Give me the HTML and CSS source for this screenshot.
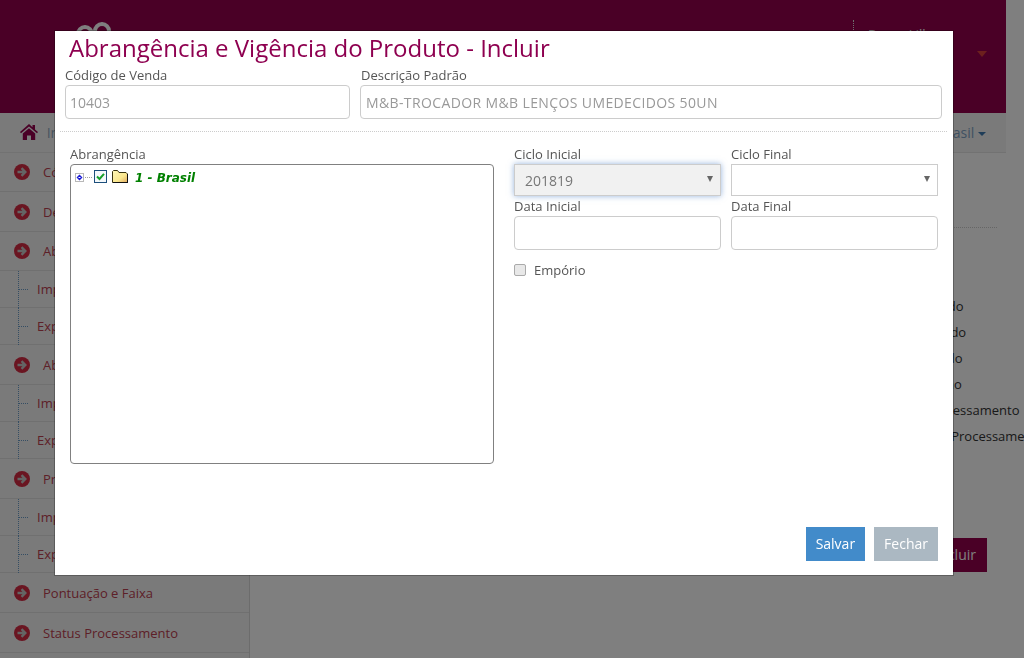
FILE: index.html

```html
<!DOCTYPE html>
<html lang="pt-BR">
<head>
<meta charset="utf-8">
<title>Abrangência e Vigência do Produto</title>
<link rel="stylesheet" href="styles.css">
</head>
<body>

<svg class="icon-defs" width="0" height="0">
  <symbol id="go" viewBox="0 0 16 16">
    <circle cx="8" cy="8" r="8" fill="currentColor"/>
    <path d="M3.500 8h7M7.500 4.200 11.300 8l-3.800 3.800" fill="none" stroke="#c8c8c8" stroke-width="2.400"/>
  </symbol>
  <linearGradient id="folder-fill" x1="0" y1="0" x2="1" y2="1">
    <stop offset="0" stop-color="#fff7b8"/>
    <stop offset=".6" stop-color="#fbe88f"/>
    <stop offset="1" stop-color="#e0a860"/>
  </linearGradient>
</svg>

<div class="page">
  <header class="top">
    <svg class="logo" width="36" height="24" viewBox="0 0 36 24">
      <circle cx="9" cy="12" r="7" fill="none" stroke="#fff" stroke-width="4"/>
      <circle cx="26" cy="9" r="7" fill="none" stroke="#fff" stroke-width="4"/>
    </svg>
    <div class="user">
      <span class="user-name">Bruno Lillo</span>
      <span class="user-caret"></span>
    </div>
  </header>

  <nav class="crumbs">
    <a class="crumb-home">
      <svg width="18" height="16" viewBox="0 0 18 16"><path d="M9 0 0 8l1 1.200L9 2.400l8 6.800L18 8l-3-2.600V1h-2.500v2.300zM2.800 9.600V16H7v-4.500h4V16h4.200V9.600L9 4.300z" fill="#94004d"/></svg>
      Início
    </a>
    <a class="crumb-region">Brasil <span class="crumb-caret"></span></a>
  </nav>

  <div class="main">
    <aside class="side">
      <a class="side-item"><svg class="go"><use href="#go"/></svg>Código de Venda</a>
      <a class="side-item"><svg class="go"><use href="#go"/></svg>Descrição</a>
      <a class="side-item"><svg class="go"><use href="#go"/></svg>Abrangência</a>
      <a class="side-sub">Importar</a>
      <a class="side-sub">Exportar</a>
      <a class="side-item"><svg class="go"><use href="#go"/></svg>Abrangência</a>
      <a class="side-sub">Importar</a>
      <a class="side-sub">Exportar</a>
      <a class="side-item"><svg class="go"><use href="#go"/></svg>Produto</a>
      <a class="side-sub">Importar</a>
      <a class="side-sub">Exportar</a>
      <a class="side-item"><svg class="go"><use href="#go"/></svg>Pontuação e Faixa</a>
      <a class="side-item"><svg class="go"><use href="#go"/></svg>Status Processamento</a>
    </aside>

    <section class="content">
      <div class="content-rule"></div>
      <ul class="status-list">
        <li>Concluído</li>
        <li>Cancelado</li>
        <li>Publicado</li>
        <li>Em Turno</li>
        <li>Em Processamento</li>
        <li>Erro no Processamento</li>
      </ul>
      <div class="content-actions">
        <a class="btn-include">Incluir</a>
      </div>
    </section>
  </div>
</div>

<div class="backdrop"></div>

<div class="modal">
  <h4 class="modal-title">Abrangência e Vigência do Produto - Incluir</h4>

  <div class="row-top">
    <div class="field field-code">
      <label>Código de Venda</label>
      <input class="input" type="text" value="10403" readonly>
    </div>
    <div class="field field-desc">
      <label>Descrição Padrão</label>
      <input class="input input-desc" type="text" value="M&amp;B-TROCADOR M&amp;B LENÇOS UMEDECIDOS 50UN" readonly>
    </div>
  </div>

  <div class="divider"></div>

  <div class="modal-body">
    <div class="col-tree">
      <label>Abrangência</label>
      <div class="tree">
        <svg class="tree-plus" width="18" height="9" viewBox="0 0 18 9">
          <rect x=".5" y=".5" width="8" height="8" fill="#fff" stroke="#b8b8b8"/>
          <path d="M4.500 1.500 7.500 4.500 4.500 7.500 1.500 4.500z" fill="#1a1ad8"/>
          <path d="M3.500 4.500h2" stroke="#fff"/>
          <path d="M10 4.500h7" stroke="#a0a0a0" stroke-dasharray="1 1"/>
        </svg>
        <svg class="tree-check" width="13" height="13" viewBox="0 0 13 13">
          <rect x=".5" y=".5" width="12" height="12" fill="#f4f8fb" stroke="#1c4f7c"/>
          <path d="M3 6.500 5.500 9 10 3.800" fill="none" stroke="#16a02a" stroke-width="2"/>
        </svg>
        <svg class="tree-folder" width="16" height="13" viewBox="0 0 16 13">
          <path d="M.5 12.500V1.500L1.500.5h4l1.500 2h7l1.500 1.500v8.500z" fill="url(#folder-fill)" stroke="#3a3410"/>
          <path d="M1 12.500h15M15.500 4v9" stroke="#111"/>
        </svg>
        <span class="tree-label">1 - Brasil</span>
      </div>
    </div>

    <div class="col-form">
      <div class="form-grid">
        <div class="field">
          <label>Ciclo Inicial</label>
          <div class="select select-on">201819</div>
        </div>
        <div class="field">
          <label>Ciclo Final</label>
          <div class="select"></div>
        </div>
        <div class="field">
          <label>Data Inicial</label>
          <input class="input" type="text">
        </div>
        <div class="field">
          <label>Data Final</label>
          <input class="input" type="text">
        </div>
      </div>
      <div class="check-row">
        <span class="check-box"></span>
        <span>Empório</span>
      </div>
    </div>
  </div>

  <div class="modal-foot">
    <a class="btn btn-save">Salvar</a>
    <a class="btn btn-close">Fechar</a>
  </div>
</div>

</body>
</html>
```

FILE: styles.css

```css
html, body {
  margin: 0;
  height: 658px;
  overflow: hidden;
}

body {
  font-family: "Open Sans", sans-serif;
  font-size: 13px;
  color: #333;
  background: #fff;
}

a {
  color: inherit;
  text-decoration: none;
}

.icon-defs {
  display: block;
  height: 0;
}

.page {
  width: 1006px;
}

/* header */
.top {
  height: 113px;
  background: #94004d;
  display: flex;
  justify-content: space-between;
  align-items: flex-start;
  box-sizing: border-box;
  padding: 20px 18px 0 76px;
}

.logo {
  display: block;
  margin-top: 2px;
}

.user {
  width: 135px;
  height: 60px;
  box-sizing: border-box;
  border-left: 1px dotted #ddd;
  padding: 5px 0 0 14px;
  position: relative;
  color: #fff;
}

.user-caret {
  position: absolute;
  right: 1px;
  top: 31px;
  border: 5px solid transparent;
  border-bottom: 0;
  border-top: 6px solid #d8403c;
}

/* breadcrumb */
.crumbs {
  height: 40px;
  box-sizing: border-box;
  background: #f5f5f5;
  border-bottom: 1px solid #e5e5e5;
  display: flex;
  justify-content: space-between;
  align-items: center;
  padding: 0 20px 0 20px;
  color: #8fa9c0;
  font-size: 14px;
}

.crumb-home svg {
  margin-right: 5px;
  vertical-align: -2px;
}

.crumb-region {
  color: #7fa3c4;
}

.crumb-caret {
  display: inline-block;
  vertical-align: 2px;
  border: 4px solid transparent;
  border-bottom: 0;
  border-top-color: #3f7bb0;
}

/* sidebar */
.main {
  display: flex;
}

.side {
  width: 250px;
  flex: none;
  height: 505px;
  box-sizing: border-box;
  background: #f5f5f5;
  border-right: 1px solid #d8d8d8;
  color: #bb4050;
}

.side-item {
  height: 40px;
  box-sizing: border-box;
  border-bottom: 1px solid #e0e0e0;
  display: flex;
  align-items: center;
  padding-left: 14px;
}

.side-item:first-child,
.side-item:nth-child(3) {
  height: 39px;
}

.go {
  width: 16px;
  height: 16px;
  margin-right: 13px;
  color: #d42a42;
}

.side-sub {
  height: 37px;
  box-sizing: border-box;
  border-bottom: 1px solid #e0e0e0;
  display: flex;
  align-items: center;
  padding-left: 37px;
  position: relative;
}

.side-sub::before {
  content: "";
  position: absolute;
  left: 18px;
  top: 0;
  bottom: -1px;
  border-left: 1px dotted #6a9cc8;
}

.side-sub::after {
  content: "";
  position: absolute;
  left: 19px;
  top: 18px;
  width: 9px;
  border-top: 1px dotted #6a9cc8;
}

/* page content behind the dialog */
.content {
  flex: 1;
  padding-top: 74px;
  min-width: 0;
}

.content-rule {
  margin-right: 9px;
  border-top: 1px dotted #ccc;
}

.status-list {
  list-style: none;
  margin: 65px 0 0;
  padding: 0 0 0 653px;
  white-space: nowrap;
  line-height: 26px;
}

.content-actions {
  display: flex;
  justify-content: flex-end;
  margin: 89px 19px 0 0;
}

.btn-include {
  background: #94004d;
  color: #fff;
  padding: 0 11px;
  height: 34px;
  line-height: 34px;
  font-size: 14px;
}

.backdrop {
  position: fixed;
  left: 0;
  top: 0;
  right: 0;
  bottom: 0;
  background: rgba(0, 0, 0, .5);
}

/* dialog */
.modal {
  position: fixed;
  left: 55px;
  top: 31px;
  width: 898px;
  height: 544px;
  box-sizing: border-box;
  background: #fff;
  box-shadow: 0 0 0 1px rgba(0, 0, 0, .25);
  display: flex;
  flex-direction: column;
}

.modal-title {
  margin: 0;
  padding: 0 0 0 14px;
  font-size: 24px;
  font-weight: 400;
  line-height: 33px;
  color: #8e0050;
}

label {
  display: block;
  font-size: 13px;
  line-height: 19px;
  color: #555;
}

.row-top {
  display: flex;
  gap: 10px;
  padding: 2px 11px 0 10px;
}

.field-code {
  width: 285px;
  flex: none;
}

.field-desc {
  flex: 1;
}

.field-desc label {
  padding-left: 1px;
}

.input {
  display: block;
  width: 100%;
  height: 34px;
  box-sizing: border-box;
  margin: 0;
  border: 1px solid #ccc;
  border-radius: 4px;
  padding: 0 4px;
  font-family: "Open Sans", sans-serif;
  font-size: 14px;
  color: #999;
  background: #fff;
  outline: 0;
}

.input-desc {
  padding-left: 5px;
  letter-spacing: .38px;
}

.divider {
  margin: 12px 6px 0 5px;
  border-top: 1px dotted #ccc;
}

.modal-body {
  display: flex;
  padding: 13px 15px 0 15px;
}

.col-tree {
  width: 424px;
  flex: none;
}

.tree {
  height: 300px;
  box-sizing: border-box;
  border: 1px solid #808080;
  border-radius: 4px;
  padding: 5px 4px;
  display: flex;
  align-items: flex-start;
}

.tree-plus {
  margin-top: 3px;
  margin-right: 1px;
}

.tree-check {
  margin-right: 5px;
}

.tree-folder {
  margin-right: 7px;
}

.tree-label {
  font-family: "DejaVu Sans", sans-serif;
  font-size: 12px;
  font-weight: 700;
  font-style: italic;
  line-height: 16px;
  color: #008000;
}

.col-form {
  margin-left: 20px;
  flex: 1;
}

.form-grid {
  display: grid;
  grid-template-columns: 207px 207px;
  column-gap: 10px;
  row-gap: 1px;
}

.select {
  height: 32px;
  box-sizing: border-box;
  border: 1px solid #ccc;
  padding: 0 10px;
  font-size: 14px;
  line-height: 31px;
  color: #777;
  position: relative;
}

.select::after {
  content: "";
  position: absolute;
  right: 7px;
  top: 11px;
  border: 3.500px solid transparent;
  border-bottom: 0;
  border-top: 6px solid #666;
}

.select-on {
  background: #f1f1f1;
  box-shadow: 0 0 6px rgba(82, 130, 200, .6);
}

.check-row {
  display: flex;
  align-items: center;
  gap: 8px;
  margin-top: 11px;
  color: #555;
  line-height: 18px;
}

.check-box {
  width: 12px;
  height: 12px;
  box-sizing: border-box;
  border: 1px solid #aaa;
  border-radius: 2px;
  background: #e8e8e8;
}

.modal-foot {
  margin-top: auto;
  display: flex;
  justify-content: flex-end;
  gap: 9px;
  padding: 0 15px 14px 0;
}

.btn {
  height: 34px;
  line-height: 34px;
  padding: 0 10px;
  font-size: 14px;
  color: #fff;
}

.btn-save {
  background: #428bca;
}

.btn-close {
  background: #abb8c2;
}
```
